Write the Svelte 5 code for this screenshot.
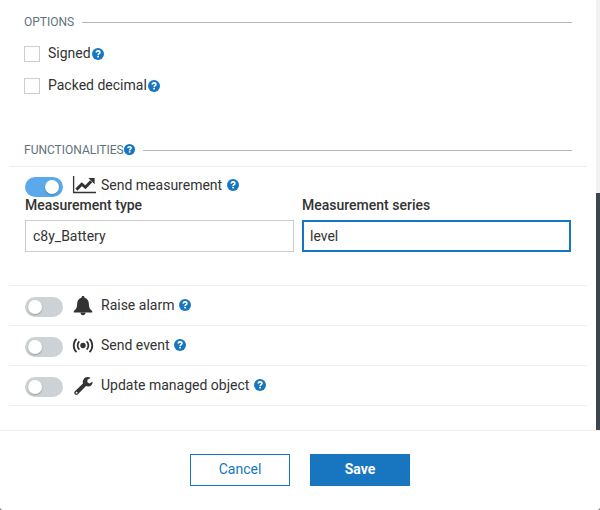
<script>
  let signed = $state(false);
  let packed = $state(false);
  let type = $state('c8y_Battery');
  let series = $state('level');
  let on = $state({ measurement: true, alarm: false, event: false, object: false });
  const others = [
    { id: 'alarm', label: 'Raise alarm' },
    { id: 'event', label: 'Send event' },
    { id: 'object', label: 'Update managed object' }
  ];
</script>

{#snippet help()}
  <svg class="help" viewBox="0 0 12 12">
    <circle cx="6" cy="6" r="6" fill="#1776bf" />
    <path d="M4 4.5C4.4 3.3 5.1 2.9 6 2.9C7.2 2.9 7.9 3.5 7.9 4.4C7.9 5.6 6.1 5.6 6.1 7" fill="none" stroke="#fff" stroke-width="1.6" />
    <rect x="5.2" y="7.8" width="1.8" height="1.6" fill="#fff" />
  </svg>
{/snippet}

{#snippet icon(id)}
  <svg class="icon" viewBox="0 0 24 20">
    {#if id === 'measurement'}
      <path d="M.6 1V17.5H23" fill="none" stroke="#333" stroke-width="1.3" />
      <path d="M3.4 14.6L8.8 9.2L12.4 12.3L18.2 6.2" fill="none" stroke="#333" stroke-width="2.9" />
      <path d="M15.4 3H21.6V9.2Z" fill="#333" />
    {:else if id === 'alarm'}
      <path d="M10 1C11 1 11.6 1.7 11.5 2.7C14.3 3.5 15.8 5.7 15.8 8.5C15.8 12.5 17 14.5 19.2 16.1V17.5H.8V16.1C3 14.5 4.2 12.5 4.2 8.5C4.2 5.7 5.7 3.5 8.5 2.7C8.4 1.7 9 1 10 1ZM7.5 17.8H12.5C12.5 19.3 11.4 20.3 10 20.3S7.5 19.3 7.5 17.8Z" fill="#333" />
    {:else if id === 'event'}
      <circle cx="10" cy="10.5" r="2.7" fill="#333" />
      <path d="M6.4 6.4C4 8.5 4 12.5 6.4 14.6M13.6 6.4C16 8.5 16 12.5 13.6 14.6M3.5 3.8C-.2 7.4 -.2 13.6 3.5 17.2M16.5 3.8C20.2 7.4 20.2 13.6 16.5 17.2" fill="none" stroke="#333" stroke-width="1.8" />
    {:else}
      <path d="M17.6 3L14.4 4.8V7.3L16.3 8.5L19.6 6.8C19.8 9.1 18.1 11.6 15.1 11.6C14.2 11.6 13.6 11.4 13 11.1L4.9 19.2C4.1 20 2.7 20 1.9 19.2C1 18.3 1 17.1 1.9 16.3L10 8.6C9 5.6 11.2 2 14.7 2C15.8 2 16.8 2.4 17.6 3Z" fill="#333" />
      <circle cx="3.6" cy="17.7" r=".9" fill="#fff" />
    {/if}
  </svg>
{/snippet}

{#snippet head(id, label)}
  <label class="head">
    <input type="checkbox" bind:checked={on[id]} />
    <span class="switch"><i></i></span>
    {@render icon(id)}
    <span class="name">{label}</span>
    {@render help()}
  </label>
{/snippet}

<div class="dialog">
  <div class="body">
    <div class="content">
      <div class="legend first"><span>OPTIONS</span><hr /></div>
      <label class="check"><input type="checkbox" bind:checked={signed} /><span class="box"></span><span class="text">Signed</span>{@render help()}</label>
      <label class="check"><input type="checkbox" bind:checked={packed} /><span class="box"></span><span class="text">Packed decimal</span>{@render help()}</label>
      <div class="legend second"><span>FUNCTIONALITIES</span>{@render help()}<hr /></div>
      <div class="list">
        <div class="row open">
          {@render head('measurement', 'Send measurement')}
          <div class="fields">
            <label class="field"><b>Measurement type</b><input type="text" bind:value={type} /></label>
            <label class="field"><b>Measurement series</b><input class="active" type="text" bind:value={series} /></label>
          </div>
        </div>
        {#each others as item}
          <div class="row">{@render head(item.id, item.label)}</div>
        {/each}
      </div>
    </div>
    <div class="scroll"><div class="thumb"></div></div>
  </div>
  <div class="footer">
    <button>Cancel</button>
    <button class="primary">Save</button>
  </div>
</div>

<style>
  :global(body) { background: #666; }
  * { box-sizing: border-box; }
  .dialog {
    width: 600px;
    height: 510px;
    overflow: hidden;
    display: flex;
    flex-direction: column;
    background: #fff;
    border-radius: 0 0 3px 3px;
    font: 14px/20px Roboto, sans-serif;
    color: #333;
  }
  .body { height: 430px; display: flex; }
  .content { flex: 1; }
  .scroll { width: 4px; background: #f1f1f1; padding-top: 193px; }
  .thumb { height: 237px; background: #3a4750; }
  .legend {
    display: flex;
    align-items: center;
    height: 20px;
    margin: 0 24px;
    font-size: 12px;
    color: #60727c;
  }
  .first { margin-top: 12px; }
  .second { margin-top: 38px; }
  hr { flex: 1; height: 1px; border: 0; margin: 1px 0 0 8px; background: #b0b8be; }
  .help { width: 12px; height: 12px; flex: none; }
  .legend .help { width: 11px; height: 11px; margin-bottom: 1px; }
  .check { display: flex; align-items: center; height: 32px; margin-left: 24px; }
  .first + .check { margin-top: 6px; }
  .check input, .head input { display: none; }
  .check .text { margin: 0 1px 2px 0; }
  .box { width: 16px; height: 16px; border: 1px solid #c9ced2; margin-right: 8px; }
  .check input:checked + .box { background: #1776bf; }
  .list { margin: 6px 9px 0; border-top: 1px solid #eee; }
  .row { height: 40px; border-bottom: 1px solid #eee; padding-left: 16px; }
  .open { height: 119px; }
  .head { display: flex; align-items: center; height: 39px; }
  .open .head { height: 37px; }
  .switch { width: 38px; height: 20px; border-radius: 10px; background: #cdd2d6; padding: 3px; margin-top: 3px; }
  .switch i { display: block; width: 14px; height: 14px; border-radius: 50%; background: #fff; box-shadow: 0 1px 2px #0004; }
  .head input:checked + .switch { background: #5aaaeb; }
  .head input:checked + .switch i { margin-left: 17px; }
  .icon { width: 24px; height: 20px; margin: 0 4px 1px 10px; overflow: visible; }
  .name { margin: 0 4.6px 2px 0; }
  .head .help { margin-bottom: 1px; }
  .fields { display: flex; gap: 8px; margin-top: -9px; }
  .field { width: 269px; }
  b { display: block; font-weight: 500; height: 25px; }
  .field input {
    display: block;
    width: 100%;
    height: 32px;
    border: 1px solid #ccc;
    padding: 0 7px;
    font: inherit;
    color: inherit;
    outline: 0;
  }
  .field input.active { border: 2px solid #1776bf; padding: 0 6px; }
  .footer { height: 80px; border-top: 1px solid #eee; display: flex; justify-content: center; gap: 20px; padding-top: 23px; }
  button { width: 100px; height: 32px; border: 1px solid #1776bf; background: #fff; color: #1776bf; font: inherit; padding: 0 0 2px; }
  .primary { background: #1776bf; color: #fff; font-weight: 700; }
</style>
